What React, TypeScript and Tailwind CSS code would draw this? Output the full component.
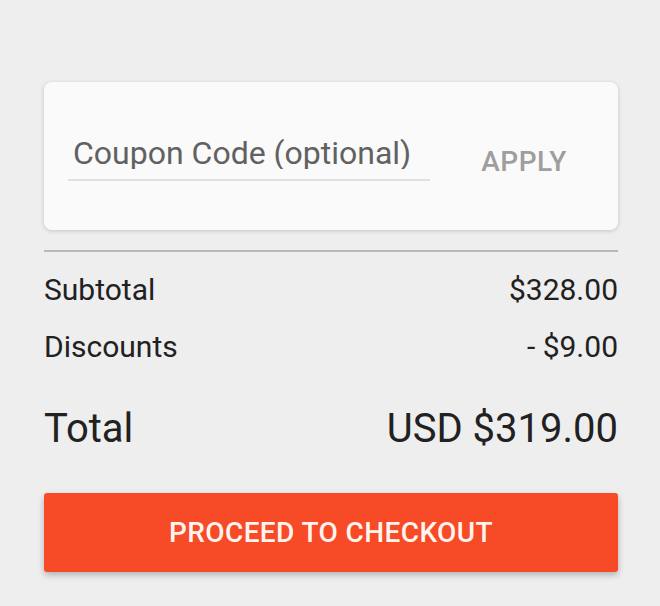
import { useState } from 'react'

export default function App() {
  const [coupon, setCoupon] = useState('')

  return (
    <div className="min-h-screen bg-[#eeeeee] font-['Roboto',sans-serif] text-[#212121]">
      <div className="ml-[44px] w-[574px] pt-[82px]">
        {/* Coupon card */}
        <div className="flex h-[148px] items-start rounded-[8px] bg-[#fafafa] pl-6 pt-[55px] shadow-[0_1px_4px_rgba(0,0,0,0.18)]">
          <div className="w-[362px] border-b-2 border-[#e0e0e0] pb-[10px] pl-[5px]">
            <input
              value={coupon}
              onChange={(e) => setCoupon(e.target.value)}
              placeholder="Coupon Code (optional)"
              className="block h-[32px] w-full bg-transparent p-0 text-[32px] leading-[32px] text-[#616161] outline-none placeholder:text-[#616161]"
            />
          </div>
          <button className="mt-[11px] flex-1 text-center text-[28px] leading-[28px] font-medium tracking-[0.5px] text-[#9e9e9e]">
            APPLY
          </button>
        </div>

        <div className="mt-[20px] border-t-2 border-[#b8b8b8]" />

        {/* Order summary */}
        <div className="mt-[23px] flex flex-col gap-[27px] text-[30px] leading-[30px]">
          <div className="flex justify-between">
            <span>Subtotal</span>
            <span>$328.00</span>
          </div>
          <div className="flex justify-between">
            <span>Discounts</span>
            <span>- $9.00</span>
          </div>
        </div>

        <div className="mt-[47px] flex justify-between text-[40px] leading-[40px]">
          <span>Total</span>
          <span>USD $319.00</span>
        </div>

        <button className="mt-[44px] flex h-[79px] w-full items-center justify-center rounded-[3px] bg-[#f64b26] text-[28px] font-medium tracking-[0.4px] text-[#fff4f0] shadow-[0_3px_6px_rgba(0,0,0,0.25)]">
          PROCEED TO CHECKOUT
        </button>
      </div>
    </div>
  )
}
